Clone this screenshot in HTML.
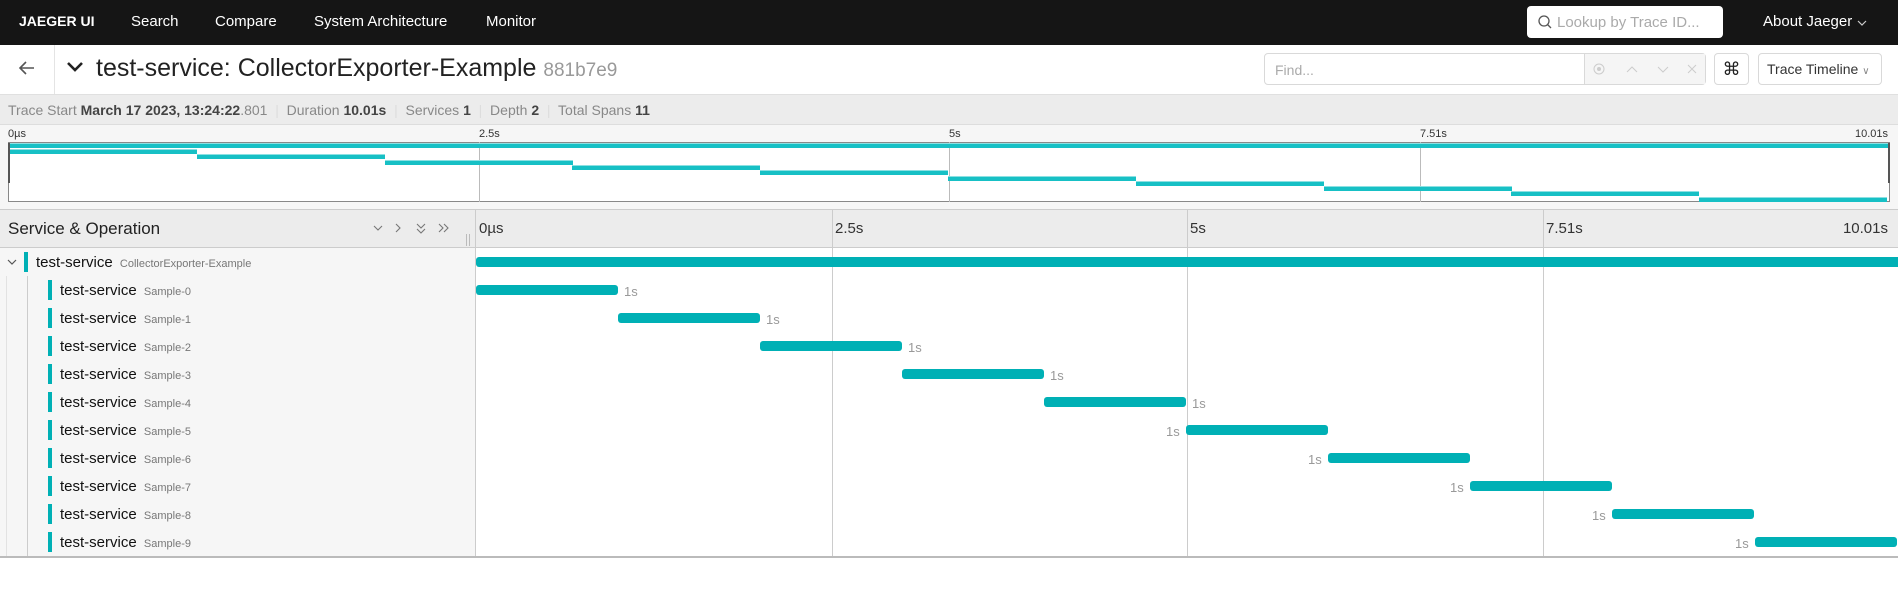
<!DOCTYPE html>
<html><head><meta charset="utf-8"><style>
*{box-sizing:border-box;margin:0;padding:0}
body{width:1898px;height:614px;background:#fff;font-family:"Liberation Sans",sans-serif;position:relative;overflow:hidden;color:#222}
.a{position:absolute}
.nav{left:0;top:0;width:1898px;height:45px;background:#151515;color:#fff;font-size:15px}
.nav span{position:absolute;top:13px}
.t{white-space:nowrap}
.bar{position:absolute;height:10px;background:#00b0b5;border-radius:3px}
.lbl{position:absolute;font-size:13px;color:#999}
.mm{position:absolute;height:5px;background:#17c0c5;border-top:1px solid #8ce0e2}
</style></head><body>
<div class="a nav">
<span style="left:19px;font-weight:bold;font-size:14px">JAEGER UI</span>
<span style="left:131px">Search</span>
<span style="left:215px">Compare</span>
<span style="left:314px">System Architecture</span>
<span style="left:486px">Monitor</span>
<div class="a" style="left:1527px;top:6px;width:196px;height:32px;background:#fff;border-radius:4px"></div>
<svg class="a" style="left:1537px;top:14px" width="16" height="16" viewBox="0 0 16 16"><circle cx="7" cy="7" r="5" fill="none" stroke="#555" stroke-width="1.3"/><path d="M10.5 10.5 L14 14" stroke="#555" stroke-width="1.3"/></svg>
<span style="left:1557px;top:14px;color:#aaa;font-size:15px">Lookup by Trace ID...</span>
<span style="left:1763px;top:13px">About Jaeger</span>
<svg class="a" style="left:1857px;top:19px" width="10" height="8"><path d="M1 2 L5 6 L9 2" fill="none" stroke="#ccc" stroke-width="1.2"/></svg>
</div>
<!-- header -->
<svg class="a" style="left:18px;top:60px" width="18" height="16"><path d="M16 8 H2 M8 2 L2 8 L8 14" fill="none" stroke="#555" stroke-width="1.6"/></svg>
<div class="a" style="left:54px;top:45px;width:1px;height:49px;background:#e4e4e4"></div>
<svg class="a" style="left:66px;top:61px" width="18" height="12"><path d="M2 2 L9 9 L16 2" fill="none" stroke="#222" stroke-width="2.6"/></svg>
<div class="a t" style="left:96px;top:54px;font-size:25px;color:#222">test-service: CollectorExporter-Example <span style="font-size:19px;color:#999">881b7e9</span></div>
<div class="a" style="left:1264px;top:53px;width:442px;height:32px;border:1px solid #d9d9d9;border-radius:4px;background:#fff"></div>
<div class="a" style="left:1584px;top:54px;width:121px;height:30px;background:#f5f5f5;border-left:1px solid #d9d9d9"></div>
<span class="a" style="left:1275px;top:62px;color:#aaa;font-size:14px">Find...</span>
<svg class="a" style="left:1590px;top:62px" width="110" height="14"><circle cx="9" cy="7" r="5" fill="none" stroke="#ccc"/><circle cx="9" cy="7" r="2" fill="#ccc"/><path d="M37 10 L42 5 L47 10 M68 5 L73 10 L78 5 M98 3 L106 11 M106 3 L98 11" fill="none" stroke="#ccc"/></svg>
<div class="a" style="left:1714px;top:53px;width:35px;height:32px;border:1px solid #d9d9d9;border-radius:4px;text-align:center;font-size:18px;line-height:30px">⌘</div>
<div class="a t" style="left:1758px;top:53px;width:124px;height:32px;border:1px solid #d9d9d9;border-radius:4px;font-size:14px;line-height:30px;padding-left:8px;color:#333">Trace Timeline <span style="font-size:10px;color:#888">&#8744;</span></div>
<!-- stats -->
<div class="a" style="left:0;top:94px;width:1898px;height:31px;background:#ececec;border-top:1px solid #e0e0e0;border-bottom:1px solid #ddd"></div>
<div class="a t" style="left:8px;top:102px;font-size:14px;color:#888">Trace Start <b style="color:#444">March 17 2023, 13:24:22</b>.801 &nbsp;<span style="color:#ddd">|</span>&nbsp; Duration <b style="color:#444">10.01s</b> &nbsp;<span style="color:#ddd">|</span>&nbsp; Services <b style="color:#444">1</b> &nbsp;<span style="color:#ddd">|</span>&nbsp; Depth <b style="color:#444">2</b> &nbsp;<span style="color:#ddd">|</span>&nbsp; Total Spans <b style="color:#444">11</b></div>
<!-- minimap -->
<div class="a" style="left:0;top:125px;width:1898px;height:85px;background:#f6f6f6"></div>
<div class="a" style="left:8px;top:142px;width:1882px;height:60px;background:#fff;border:1px solid #888"></div>
<div class="a" id="mm" style="left:0;top:0"></div>
<div class="a" style="left:0;top:209px;width:1898px;height:1px;background:#ccc"></div>
<!-- table header -->
<div class="a" style="left:0;top:210px;width:1898px;height:38px;background:#ececec;border-bottom:1px solid #ccc"></div>
<div class="a t" style="left:8px;top:219px;font-size:17px;color:#222">Service &amp; Operation</div>
<svg class="a" style="left:372px;top:222px" width="80" height="14"><path d="M2 4 L6 8 L10 4 M24 2 L28 6 L24 10 M45 2 L49 6 L53 2 M45 7 L49 11 L53 7 M67 2 L71 6 L67 10 M72 2 L76 6 L72 10" fill="none" stroke="#777" stroke-width="1.1"/></svg>
<div class="a" style="left:466px;top:234px;width:4px;height:12px;border-left:1px solid #bbb;border-right:1px solid #bbb"></div>
<div class="a" style="left:475px;top:210px;width:1px;height:347px;background:#ccc"></div>
<div class="a" style="left:0;top:248px;width:475px;height:309px;background:#f6f6f6"></div>
<div class="a" style="left:475px;top:248px;width:1px;height:309px;background:#ccc"></div>
<div class="a" style="left:0;top:556px;width:1898px;height:2px;background:#bbb"></div>
<div class="a" style="left:27px;top:276px;width:1px;height:280px;background:#ccc"></div>
<div class="a" style="left:6px;top:276px;width:1px;height:280px;background:#e2e2e2"></div>
<div id="g"></div>
<script>
var h='';
var x0=476,W=1422,u=W/10.01;
var ticks=['0µs','2.5s','5s','7.51s','10.01s'];
for(var k=0;k<5;k++){var gx=x0+W*k/4;
 if(k>0&&k<4)h+='<div class="a" style="left:'+Math.round(gx)+'px;top:210px;width:1px;height:346px;background:#ccc"></div>';
 var mx=8+1882*k/4;
 if(k>0&&k<4)h+='<div class="a" style="left:'+Math.round(mx)+'px;top:142px;width:1px;height:60px;background:#bbb"></div>';
 h+='<div class="a t" style="'+(k==4?'right:10px':'left:'+Math.round(gx+3)+'px')+';top:220px;font-size:15px;color:#333">'+ticks[k]+'</div>';
 h+='<div class="a t" style="'+(k==4?'right:10px':'left:'+Math.round(mx)+'px')+';top:128px;font-size:11px;color:#333">'+ticks[k]+'</div>';
}
// minimap bars
h+='<div class="mm" style="left:9px;top:143px;width:1880px"></div>';
for(var i=0;i<10;i++){var mw=1880/10.01;h+='<div class="mm" style="left:'+Math.round(9+mw*i)+'px;top:'+Math.round(149+i*5.3)+'px;width:'+Math.round(mw)+'px"></div>';}
h+='<div class="a" style="left:8px;top:143px;width:2px;height:40px;background:#555"></div><div class="a" style="left:1888px;top:143px;width:2px;height:40px;background:#555"></div>';
// rows
h+='<svg class="a" style="left:7px;top:258px" width="10" height="8"><path d="M1 2 L5 6 L9 2" fill="none" stroke="#555" stroke-width="1.2"/></svg>';
h+='<div class="a" style="left:24px;top:252px;width:4px;height:20px;background:#00b0b5"></div>';
h+='<div class="a t" style="left:36px;top:254px;font-size:15px;color:#111">test-service <span style="font-size:11px;color:#777">&nbsp;CollectorExporter-Example</span></div>';
h+='<div class="bar" style="left:476px;top:257px;width:1422px;border-radius:3px 0 0 3px"></div>';
for(var i=0;i<10;i++){var y=276+i*28;
 h+='<div class="a" style="left:48px;top:'+(y+4)+'px;width:4px;height:20px;background:#00b0b5"></div>';
 h+='<div class="a t" style="left:60px;top:'+(y+6)+'px;font-size:15px;color:#111">test-service <span style="font-size:11px;color:#777">&nbsp;Sample-'+i+'</span></div>';
 var bx=x0+u*i;var bw=u;if(bx+bw>1898)bw=1898-bx;
 h+='<div class="bar" style="left:'+Math.round(bx)+'px;top:'+(y+9)+'px;width:'+Math.round(bw)+'px"></div>';
 if(i<5)h+='<div class="lbl" style="left:'+Math.round(bx+u+6)+'px;top:'+(y+8)+'px">1s</div>';
 else h+='<div class="lbl" style="left:'+Math.round(bx-20)+'px;top:'+(y+8)+'px">1s</div>';
}
document.getElementById('g').innerHTML=h;
</script>
</body></html>
